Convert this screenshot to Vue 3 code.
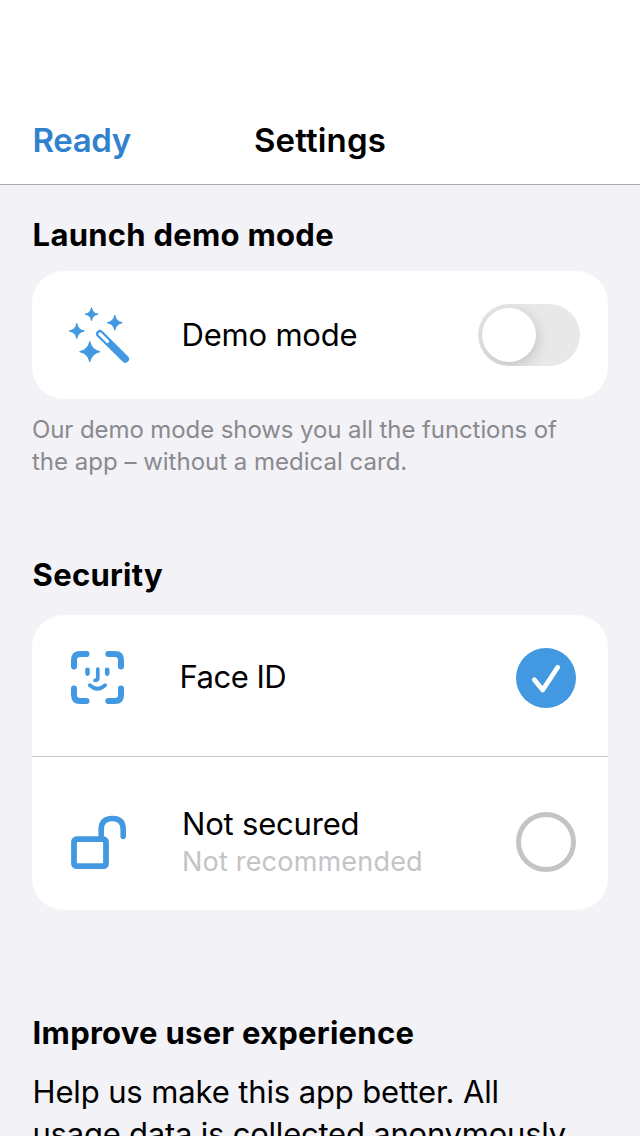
<script setup>
import { ref } from 'vue'

const demo = ref(false)
const security = ref('face')
</script>

<template>
  <div class="screen">
    <header class="bar">
      <a class="ready" @click.prevent>Ready</a>
      <h1 class="title">Settings</h1>
    </header>

    <main class="content">
      <h2 class="heading launch">Launch demo mode</h2>
      <section class="card demo">
        <svg class="icon wand" viewBox="0 0 64 64" width="64" height="64">
          <g fill="#4299e1" stroke="#4299e1" stroke-width="1" stroke-linejoin="round">
            <path d="M24.500 4.700Q25.400 10.300 31 11.200Q25.400 12.100 24.500 17.700Q23.600 12.100 18 11.200Q23.600 10.300 24.500 4.700Z" />
            <path d="M47.800 12.200Q49 18.500 55.300 19.700Q49 20.900 47.800 27.200Q46.600 20.900 40.300 19.700Q46.600 18.500 47.800 12.200Z" />
            <path d="M9.800 20.500Q11 26.800 17.300 28Q11 29.200 9.800 35.500Q8.600 29.200 2.300 28Q8.600 26.800 9.800 20.500Z" />
            <path d="M22.800 38.500Q24.600 46.900 33 48.700Q24.600 50.500 22.800 58.900Q21 50.500 12.600 48.700Q21 46.900 22.800 38.500Z" />
          </g>
          <path d="M32.800 30.800L58.200 55.900" stroke="#4299e1" stroke-width="7.600" stroke-linecap="round" />
          <path d="M33 31L40.500 38.400" stroke="#fff" stroke-width="3.300" stroke-linecap="round" />
        </svg>
        <span class="label demo-label">Demo mode</span>
        <button class="switch" :class="{ on: demo }" aria-label="Demo mode" @click="demo = !demo">
          <span class="knob"></span>
        </button>
      </section>
      <p class="note"><span class="n1">Our demo mode shows you all the functions of</span><br />the app – without a medical card.</p>

      <h2 class="heading security">Security</h2>
      <section class="card">
        <div class="row face" @click="security = 'face'">
          <svg class="icon" viewBox="0 0 64 64" width="64" height="64" fill="none" stroke="#4299e1" stroke-linecap="round">
            <path d="M6 18.500V12Q6 6 12 6H18.500M40.300 6H47Q53 6 53 12V18.500M53 40.500V47Q53 53 47 53H40.300M18.500 53H12Q6 53 6 47V40.500" stroke-width="6" />
            <path d="M19.500 21.700V25.600M39.200 21.700V25.600" stroke-width="4.600" />
            <path d="M29.800 21.200V29.700Q29.800 32.300 27 32.300" stroke-width="3.700" />
            <path d="M21.700 37.200Q29.500 44.400 37.200 37.200" stroke-width="3.800" />
          </svg>
          <span class="label face-label">Face ID</span>
          <svg class="radio" viewBox="0 0 60 60" width="60" height="60">
            <circle cx="30" cy="30" r="30" fill="#4299e1" />
            <path d="M18.300 31.800L26.700 42L41.700 19.300" fill="none" stroke="#fff" stroke-width="4.800" stroke-linecap="round" stroke-linejoin="round" />
          </svg>
        </div>
        <div class="row open" @click="security = 'none'">
          <svg class="icon" viewBox="0 0 64 64" width="64" height="64" fill="none" stroke="#4299e1">
            <rect x="6" y="27.200" width="32" height="27" rx="2.500" stroke-width="5.800" />
            <path d="M33.200 26V17.400Q33.200 6.500 44.200 6.500Q55.200 6.500 55.200 17.400V24.200" stroke-width="5.600" stroke-linecap="round" />
          </svg>
          <div class="stack">
            <span class="label open-label">Not secured</span>
            <span class="hint">Not recommended</span>
          </div>
          <span class="radio empty"></span>
        </div>
      </section>

      <h2 class="heading improve">Improve user experience</h2>
      <p class="body">Help us make this app better. All<br /><span class="l2">usage data is collected anonymously</span></p>
    </main>
  </div>
</template>

<style>
body {
  margin: 0;
  background: #f2f2f7;
}
</style>

<style scoped>
.screen {
  box-sizing: border-box;
  width: 640px;
  height: 1136px;
  overflow: hidden;
  background: #f2f2f7;
  color: #000;
  font-family: Inter, "Liberation Sans", sans-serif;
}
h1, h2, p {
  margin: 0;
}
.bar {
  box-sizing: border-box;
  height: 185px;
  padding: 120px 32px 0;
  display: grid;
  grid-template-columns: 1fr auto 1fr;
  background: #fff;
  border-bottom: 1px solid #a9a8ac;
}
.ready, .title {
  font-size: 33px;
  line-height: 40px;
  font-weight: 600;
}
.title {
  letter-spacing: 0.15px;
}
.ready {
  color: #3182ce;
  letter-spacing: -0.4px;
  padding-left: 0.6px;
}
.content {
  padding: 30px 32px 0;
}
.heading {
  font-size: 31px;
  line-height: 40px;
  font-weight: 700;
  letter-spacing: 0.27px;
  padding-left: 0.6px;
  white-space: nowrap;
}
.card {
  background: #fff;
  border-radius: 32px;
  overflow: hidden;
}
.launch {
  margin-bottom: 16px;
}
.demo {
  box-sizing: border-box;
  height: 128px;
  padding: 0 28px 0 35px;
  display: flex;
  align-items: center;
}
.label {
  font-size: 31px;
  line-height: 40px;
  letter-spacing: -0.2px;
  white-space: nowrap;
}
.icon {
  flex: none;
}
.demo-label {
  margin: 0 0 0 50.500px;
}
.switch {
  box-sizing: border-box;
  width: 102px;
  height: 62px;
  margin-left: auto;
  padding: 4px;
  border: 0;
  border-radius: 31px;
  background: #e8e8e8;
  overflow: hidden;
  display: flex;
}
.switch.on {
  background: #4299e1;
  justify-content: flex-end;
}
.knob {
  width: 54px;
  height: 54px;
  border-radius: 50%;
  background: #fff;
  box-shadow: 1px 4px 14px rgba(0, 0, 0, 0.17);
}
.note {
  margin-top: 15px;
  font-size: 24px;
  line-height: 32px;
  color: #8a8a8e;
  white-space: nowrap;
}
.n1 {
  letter-spacing: -0.09px;
}
.security {
  margin: 77px 0 20px;
}
.row {
  box-sizing: border-box;
  display: flex;
  padding: 0 32px 0 36px;
}
.face {
  height: 142px;
  padding-top: 33px;
  border-bottom: 1px solid #c6c6c8;
}
.face-label {
  margin: 9px 0 0 47.500px;
  letter-spacing: -0.5px;
}
.open {
  height: 153px;
  padding-top: 55px;
}
.stack {
  display: flex;
  flex-direction: column;
  margin: -8px 0 0 50px;
}
.hint {
  margin-top: 1px;
  font-size: 27px;
  line-height: 34px;
  letter-spacing: 0.2px;
  color: #c4c4c6;
}
.radio {
  flex: none;
  box-sizing: border-box;
  width: 60px;
  height: 60px;
  margin-left: auto;
}
.empty {
  border: 5px solid #c4c4c6;
  border-radius: 50%;
}
.improve {
  margin-top: 103px;
}
.body {
  margin-top: 18px;
  padding-left: 0.5px;
  font-size: 31px;
  line-height: 42px;
  letter-spacing: -0.13px;
  white-space: nowrap;
}
.l2 {
  letter-spacing: -0.22px;
}
</style>
